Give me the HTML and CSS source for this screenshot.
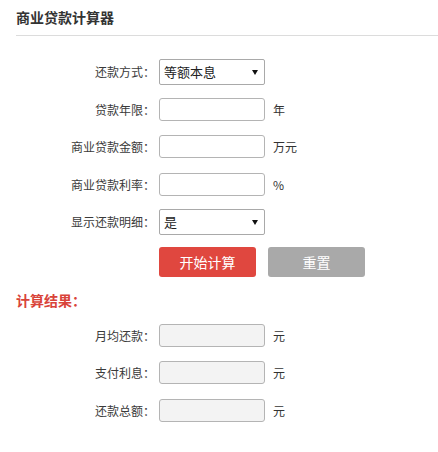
FILE: index.html
```html
<!DOCTYPE html>
<html lang="zh-CN">
<head>
<meta charset="utf-8">
<title>商业贷款计算器</title>
<link rel="stylesheet" href="styles.css">
</head>
<body>
<div class="calc">
  <div class="head"><h1 class="title">商业贷款计算器</h1></div>
  <div class="form">
    <div class="row">
      <label class="lbl">还款方式：</label>
      <div class="sel-wrap">
        <select class="sel"><option>等额本息</option><option>等额本金</option></select>
        <span class="arrow"></span>
      </div>
    </div>
    <div class="row">
      <label class="lbl">贷款年限：</label>
      <input class="inp" type="text">
      <span class="unit">年</span>
    </div>
    <div class="row">
      <label class="lbl">商业贷款金额：</label>
      <input class="inp" type="text">
      <span class="unit">万元</span>
    </div>
    <div class="row">
      <label class="lbl">商业贷款利率：</label>
      <input class="inp" type="text">
      <span class="unit">%</span>
    </div>
    <div class="row">
      <label class="lbl">显示还款明细：</label>
      <div class="sel-wrap">
        <select class="sel"><option>是</option><option>否</option></select>
        <span class="arrow"></span>
      </div>
    </div>
    <div class="btns">
      <button class="btn btn-go" type="button">开始计算</button>
      <button class="btn btn-reset" type="button">重置</button>
    </div>
  </div>
  <h2 class="res-title">计算结果：</h2>
  <div class="results">
    <div class="row">
      <label class="lbl">月均还款：</label>
      <input class="inp ro" type="text" readonly>
      <span class="unit">元</span>
    </div>
    <div class="row">
      <label class="lbl">支付利息：</label>
      <input class="inp ro" type="text" readonly>
      <span class="unit">元</span>
    </div>
    <div class="row">
      <label class="lbl">还款总额：</label>
      <input class="inp ro" type="text" readonly>
      <span class="unit">元</span>
    </div>
  </div>
</div>
</body>
</html>
```
FILE: styles.css
```css
* { box-sizing: border-box; }
html, body {
  margin: 0;
  padding: 0;
  background: #fff;
}
body {
  font-family: "Noto Sans CJK SC", "Noto Sans", sans-serif;
  color: #333;
  font-size: 12px;
}
.calc {
  padding-left: 16px;
}
.head {
  height: 36px;
  border-bottom: 1px solid #dcdcdc;
  padding-top: 7px;
}
.title {
  margin: 0;
  font-size: 14px;
  font-weight: bold;
  line-height: 20px;
  color: #333;
}
.form {
  padding-top: 17px;
}
.row {
  display: flex;
  align-items: center;
  height: 37.5px;
}
.lbl {
  width: 143px;
  padding-right: 4px;
  text-align: right;
  font-size: 12px;
  color: #3a3a3a;
  white-space: nowrap;
}
.sel-wrap {
  position: relative;
  width: 106px;
  height: 26px;
}
.sel {
  appearance: none;
  -webkit-appearance: none;
  width: 106px;
  height: 26px;
  border: 1px solid #a9a9a9;
  border-radius: 2px;
  background: #fff;
  padding: 0 0 0 4px;
  font-family: "Noto Sans CJK SC", sans-serif;
  font-size: 13px;
  color: #222;
  margin: 0;
}
.arrow {
  position: absolute;
  right: 7px;
  top: 11px;
  width: 0;
  height: 0;
  border-left: 3px solid transparent;
  border-right: 3px solid transparent;
  border-top: 5px solid #111;
  pointer-events: none;
}
.inp {
  width: 106px;
  height: 23px;
  border: 1px solid #b4b4b4;
  border-radius: 3px;
  background: #fff;
  margin: 0;
  padding: 0 4px;
}
.inp.ro {
  background: #f3f3f3;
}
.unit {
  margin-left: 8px;
  font-size: 12px;
  color: #333;
}
.btns {
  display: flex;
  gap: 12px;
  padding-left: 143px;
  margin-top: 6px;
}
.btn {
  width: 97px;
  height: 30px;
  border: none;
  border-radius: 3px;
  color: #fff;
  font-family: "Noto Sans CJK SC", sans-serif;
  font-size: 14px;
  padding: 0;
}
.btn-go { background: #e0473f; }
.btn-reset { background: #a9a9a9; }
.res-title {
  margin: 13px 0 0;
  font-size: 14px;
  font-weight: bold;
  line-height: 20px;
  color: #d9443a;
}
.results {
  padding-top: 7px;
}
```
